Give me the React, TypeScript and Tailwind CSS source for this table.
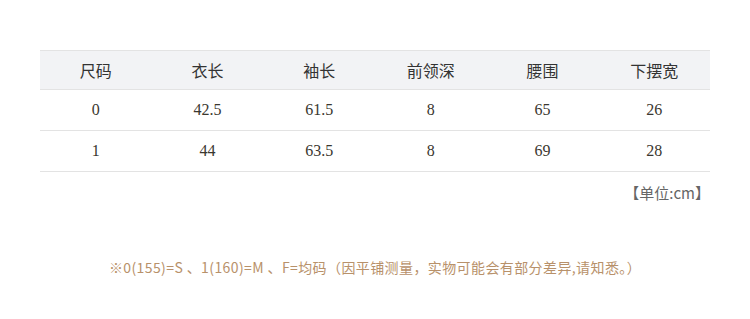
import React from 'react';

const headers = ['尺码', '衣长', '袖长', '前领深', '腰围', '下摆宽'];

const rows = [
  ['0', '42.5', '61.5', '8', '65', '26'],
  ['1', '44', '63.5', '8', '69', '28'],
];

const App = () => {
  return (
    <div className="w-[750px] h-[319px] bg-white pt-[50px] px-[40px]">
      {/* Size table */}
      <div className="border-t border-[#e3e3e3]">
        <div className="grid grid-cols-6 h-[39px] bg-[#f2f3f5] border-b border-[#e3e3e3] items-center text-center text-[16px] text-[#333] font-['Noto_Sans_CJK_SC',sans-serif]">
          {headers.map((h) => (
            <div key={h}>{h}</div>
          ))}
        </div>
        {rows.map((row, i) => (
          <div
            key={i}
            className="grid grid-cols-6 h-[41px] border-b border-[#e3e3e3] items-center text-center text-[16px] text-[#3a372f] font-['Liberation_Serif',serif]"
          >
            {row.map((cell, j) => (
              <div key={j}>{cell}</div>
            ))}
          </div>
        ))}
      </div>

      <div className="flex justify-end pt-[10px] text-[15px] text-[#666] font-['Noto_Sans_CJK_SC',sans-serif]">
        【单位:cm】
      </div>

      <div className="pt-[52px] text-center text-[14px] tracking-[0.4px] text-[#b8916a] font-['Noto_Sans_CJK_SC',sans-serif]">
        ※0(155)=S 、1(160)=M 、F=均码（因平铺测量，实物可能会有部分差异,请知悉。）
      </div>
    </div>
  );
};

export default App;
